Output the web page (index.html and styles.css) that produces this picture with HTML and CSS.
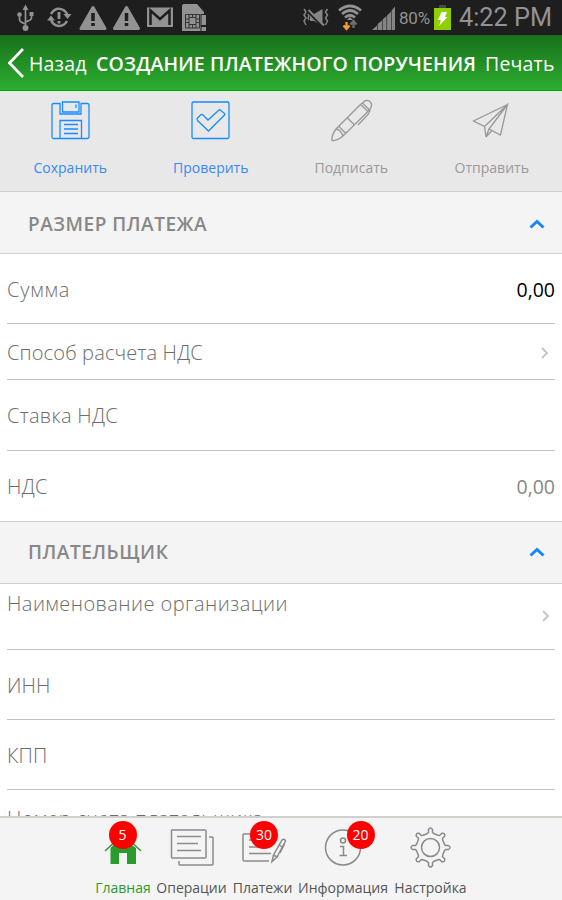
FILE: index.html
```html
<!DOCTYPE html>
<html lang="ru">
<head>
<meta charset="utf-8">
<title>Создание платежного поручения</title>
<link rel="stylesheet" href="styles.css">
</head>
<body>
<div class="screen">
  <div class="status">
    <svg class="status-icons" width="562" height="35" viewBox="0 0 562 35" fill="none" stroke="#929292" stroke-width="1.7">
      <path d="M25.500 8V28M19.500 15V19.500Q19.500 22 25.500 24M31.500 14V18Q31.500 20 25.500 22"/>
      <path d="M25.500 4.500L28.500 10H22.500Z" fill="#929292" stroke="none"/>
      <circle cx="25.500" cy="28" r="3" fill="#929292" stroke="none"/><circle cx="19.500" cy="14.500" r="2.300" fill="#929292" stroke="none"/><path d="M29.500 12h4v4h-4z" fill="#929292" stroke="none"/>
      <path d="M51 14C55 7 64 7 67.500 15M67 21C63 28 54 28 50.500 19" stroke-width="2.500"/>
      <path d="M63.500 14H71.500L67.500 19ZM47 20.500H55L51 15.500Z" fill="#929292" stroke="none"/>
      <path d="M59 12V19M59 21V23.500" stroke-width="2.800"/>
      <g fill="#929292" stroke="#929292" stroke-width="3" stroke-linejoin="round"><path d="M93 7.500L105 28.500H81ZM126.500 7.500L138.500 28.500H114.500Z"/></g>
      <path d="M93 13V21M93 23V26M126.500 13V21M126.500 23V26" stroke="#1e1e1e" stroke-width="3.500"/>
      <path d="M147 7.500H173V27H147Z" fill="#929292" stroke="none"/><path d="M150.500 25V10.500L160 19L169.500 10.500V25" stroke="#1e1e1e" stroke-width="2.500"/>
      <path d="M184 4H197L204 12V31H182V6Q182 4 184 4Z" fill="#929292" stroke="none"/>
      <path d="M185.500 14.500H199.500V28H185.500ZM189 17.500h7v7h-7zM189 14.500v3m3.500-3v3m3.500-3v3M189 24.500v3.500m3.500-3.500v3.500m3.500-3.500v3.500M185.500 19h3.500m-3.500 3.500h3.500m7-3.500h3.500m-3.500 3.500h3.500" stroke="#333" stroke-width="1"/>
      <path d="M200.500 14H207V32H200.500Z" fill="#1e1e1e" stroke="none"/><path d="M201.500 15H206V25H201.500ZM201.500 27H206V31H201.500Z" fill="#929292" stroke="none"/>
      <g stroke="#858585"><path d="M310 14H314L322.500 9V26L314 21H310Z" fill="#858585" stroke="none"/><path d="M307 11L323 27" stroke="#1e1e1e" stroke-width="2"/><path d="M308.500 10L324 25.500" stroke-width="2"/><path d="M304 9l2 3-2 3 2 3-2 3 2 4M308 14l1 2-1 2 1 2M327.500 9l-2 3 2 3-2 3 2 3-2 4" stroke-width="1.500"/></g>
      <g stroke-width="2.700" stroke="#929292"><path d="M339 10.500Q350 1.500 361 10.500M342 14Q350 7 358 14M345 17.500Q350 13 355 17.500"/></g>
      <path d="M350 17L353 20H347Z" fill="#929292" stroke="none"/>
      <path d="M346.500 22V29M343.500 25.500L346.500 29L349.500 25.500" stroke="#f79a32" stroke-width="2.300"/><path d="M353.500 28V22M350.500 24.500L353.500 21L356.500 24.500" stroke="#6e6e6e" stroke-width="2.300"/>
      <path d="M372 30L377 25.500V30ZM377.600 30V24L382 20.500V30ZM382.600 30V19.500L386.500 16V30ZM387.100 30V15.500L391 11.500V30ZM391.600 30V10.500L395 6.500V30Z" fill="#858585" stroke="none"/>
      <path d="M439 5H446V9H439Z" fill="#484848" stroke="none"/><path d="M434 8H451V30H434Z" fill="#8fce00" stroke="none"/><path d="M441.500 12H447L445 17H447.500L439 26L441 20H438Z" fill="#fff" stroke="none"/>
    </svg>
    <span class="battery">80%</span><span class="clock">4:22 PM</span>
  </div>
  <header class="nav">
    <svg width="17" height="30" viewBox="0 0 17 30"><path d="M15 1L1.500 15L15 29" fill="none" stroke="#fff" stroke-width="2.700"/></svg>
    <span class="back">Назад</span><h1>СОЗДАНИЕ ПЛАТЕЖНОГО ПОРУЧЕНИЯ</h1><span class="print">Печать</span>
  </header>
  <div class="tools">
    <div class="tool active"><svg viewBox="0 0 42 44"><path d="M10 3.500H3.500Q2 3.500 2 5V37Q2 38.500 3.500 38.500H37.500Q39 38.500 39 37V5Q39 3.500 37.500 3.500H31V14H10ZM12.500 2H29V12H12.500ZM26 4.500V8M10 38.500V20.500H31.500V38.500M14 24.500H28M14 29H28M14 33.500H28"/></svg><span>Сохранить</span></div>
    <div class="tool active"><svg viewBox="0 0 42 44"><rect x="2" y="2" width="37" height="36.500" rx="1.500"/><path d="M7.500 18L11 14.500Q12 14 13 15L18 20L29.500 9.500L34.500 13.500Q35 14 34.500 15L18.500 31L7.500 20.500Q6.500 19 7.500 18Z"/></svg><span>Проверить</span></div>
    <div class="tool"><svg viewBox="0 0 42 44"><path d="M1 40.500Q.500 35 5 29L29.500 4.500L37 11.500L13 35Q7 41 1 40.500ZM5 29Q10 30 12 36M8 26.500L15 33.500M16.500 18L23.500 25M31.500 3.500Q34-1 38.500 1Q42.500 5 39 9L37 11M29.500 4.500L31.500 3L39 10.500L37.500 14L27 25"/></svg><span>Подписать</span></div>
    <div class="tool"><svg viewBox="0 0 42 44"><path d="M36.500 4.500L2.500 21L13.500 26.500L15 37L18 29L29.500 35L36.500 4.500L13.500 26.500M36.500 4.500L18 29M15 37L20.500 31"/></svg><span>Отправить</span></div>
  </div>
  <main class="form">
    <div class="section"><h2>РАЗМЕР ПЛАТЕЖА</h2><svg width="16" height="10" viewBox="0 0 16 10"><path d="M1.500 8.500L8 2.500L14.500 8.500"/></svg></div>
    <div class="row"><span class="w-sum">Сумма</span><b>0,00</b></div>
    <div class="row short"><span class="w-mode">Способ расчета НДС</span><svg class="more" width="8" height="12" viewBox="0 0 8 12"><path d="M1 1L6 6L1 11"/></svg></div>
    <div class="row"><span>Ставка НДС</span></div>
    <div class="row last"><span>НДС</span><b class="muted">0,00</b></div>
    <div class="section second"><h2>ПЛАТЕЛЬЩИК</h2><svg width="16" height="10" viewBox="0 0 16 10"><path d="M1.500 8.500L8 2.500L14.500 8.500"/></svg></div>
    <div class="row org"><span class="w-org">Наименование организации</span><svg class="more" width="8" height="12" viewBox="0 0 8 12"><path d="M1 1L6 6L1 11"/></svg></div>
    <div class="row"><span class="w-code">ИНН</span></div>
    <div class="row kpp"><span class="w-code">КПП</span></div>
    <div class="row account"><span>Номер счета плательщика</span></div>
  </main>
  <nav class="tabs">
    <div class="tab t1 selected"><div class="pic"><svg width="44" height="44" viewBox="0 0 44 44"><path d="M9.500 39V23L20 12L35 23V39H26V28H18V39Z" fill="#299c2d" stroke="none"/><path d="M4 26L22 9L40 26" stroke="#299c2d"/></svg><i>5</i></div><span>Главная</span></div>
    <div class="tab t2"><div class="pic"><svg width="44" height="44" viewBox="0 0 44 44"><path d="M1.500 5.500Q1.500 5 2 5H35Q36 5 36 6V32Q36 33 35 33H2.500Q1.500 33 1.500 32ZM39 12H42Q43 12 43 13V39Q43 40 42 40H10Q9 40 9 39V36M7 11.500H31M7 18.500H28M7 25.500H31"/></svg></div><span>Операции</span></div>
    <div class="tab t3"><div class="pic"><svg width="44" height="44" viewBox="0 0 44 44"><path d="M30 9H3Q2 9 2 10V34Q2 36 3 36H28M8 15H20M8 22H25M8 28.500H30M31 36.500L32.500 30L41 15Q43.500 13 44.500 16L36 32ZM32.500 30L36 32M38 20L41 22M43.500 19L39 28"/></svg><i>30</i></div><span>Платежи</span></div>
    <div class="tab t4"><div class="pic"><svg width="44" height="44" viewBox="0 0 44 44"><circle cx="22" cy="22.500" r="17.500"/><circle cx="22" cy="15.500" r="2.500"/><path d="M19 21.500H22.500V30.500M18.500 30.500H26"/></svg><i>20</i></div><span>Информация</span></div>
    <div class="tab t5"><div class="pic"><svg width="44" height="44" viewBox="-21.500 -22.500 44 44"><path stroke-linejoin="round" d="M-3.500 -13.800L-2 -15V-18Q0 -21 2 -18V-15L3.500 -13.800L7.500 -12.200L9.200 -12L11.300 -14.200Q14.800 -14.800 14.200 -11.300L12 -9.200L12.200 -7.500L13.800 -3.500L15 -2H18Q21 0 18 2H15L13.800 3.500L12.200 7.500L12 9.200L14.200 11.300Q14.800 14.800 11.300 14.200L9.200 12L7.500 12.200L3.500 13.800L2 15V18Q0 21 -2 18V15L-3.500 13.800L-7.500 12.200L-9.200 12L-11.300 14.200Q-14.800 14.800 -14.200 11.300L-12 9.200L-12.200 7.500L-13.800 3.500L-15 2H-18Q-21 0 -18 -2H-15L-13.800 -3.500L-12.200 -7.500L-12 -9.200L-14.200 -11.300Q-14.800 -14.800 -11.300 -14.200L-9.200 -12L-7.500 -12.200Z"/><circle r="9"/></svg></div><span>Настройка</span></div>
  </nav>
</div>
</body>
</html>
```
FILE: styles.css
```css
* { box-sizing: border-box; }
body { margin: 0; font-family: "Open Sans", sans-serif; background: #fff; }
.screen { width: 562px; height: 900px; overflow: hidden; display: flex; flex-direction: column; }
.status { position: relative; height: 35px; flex: none; background: #1e1e1e; color: #929292; font-family: Roboto, sans-serif; display: flex; align-items: center; }
.status-icons { position: absolute; inset: 0; }
.battery { margin-left: 399px; width: 60px; font-size: 17px; letter-spacing: -.2px; }
.clock { font-size: 25.300px; line-height: 35px; white-space: nowrap; }
.nav { height: 56px; flex: none; display: flex; align-items: center; padding: 2px 7px 0 8px; background: linear-gradient(#19701b, #2bae2f); border-bottom: 1px solid #00a800; color: #fff; font-size: 19.500px; white-space: nowrap; }
.nav svg { flex: none; margin-top: -2px; }
.back { margin-left: 4px; width: 67px; letter-spacing: .2px; }
.nav h1 { margin: 0; width: 389px; font-size: 19.500px; font-weight: 600; letter-spacing: .14px; }
.print { flex: none; letter-spacing: .2px; }
.tools { height: 101px; flex: none; display: grid; grid-template-columns: repeat(4, 1fr); background: #e8e8e8; border-bottom: 1px solid #cfcfcf; }
.tool { display: flex; flex-direction: column; align-items: center; color: #999; font-size: 14px; line-height: 20px; padding-top: 9px; }
.tool.active { color: #3988ef; }
.tool svg { width: 42px; height: 44px; fill: none; stroke: #999; stroke-width: 1.300; overflow: visible; position: relative; left: .5px; }
.tool.active svg { stroke: #168cff; }
.tool span { margin-top: 14px; }
.form { flex: 1; min-height: 0; overflow: hidden; }
.section { height: 62px; background: #f4f4f4; border-bottom: 1px solid #cfcfcf; padding: 0 17px 0 28px; display: flex; align-items: center; justify-content: space-between; }
.section h2 { font-size: 19px; line-height: 26px; margin: 2px 0 0; font-weight: 600; color: #888; white-space: nowrap; letter-spacing: .52px; }
.section svg { fill: none; stroke: #1688ff; stroke-width: 3; margin-top: 2px; }
.section.second { height: 63px; border-top: 1px solid #cfcfcf; }
.section.second h2 { margin-top: 0; }
.section.second svg { margin-top: 0; }
.row { height: 70.300px; margin: 0 7px; border-bottom: 1px solid #c3c3c3; display: flex; align-items: center; justify-content: space-between; font-size: 20px; line-height: 28px; font-weight: 300; color: #6c6c6c; white-space: nowrap; padding-top: 2px; letter-spacing: .3px; }
.row b { font-size: 19.500px; font-weight: 400; color: #000; letter-spacing: 0; }
.row .muted { color: #888; }
.w-sum { letter-spacing: .8px; }
.w-mode { letter-spacing: .15px; }
.w-org { letter-spacing: .45px; }
.w-code { letter-spacing: .1px; }
.more { fill: none; stroke: #c4c4c4; stroke-width: 1.800; margin-right: 6px; }
.short { height: 56px; }
.last { border: 0; }
.org { height: 66px; align-items: flex-start; padding-top: 6px; }
.org .more { margin-top: 20px; margin-right: 5px; }
.account { align-items: flex-start; padding-top: 15px; }
.tabs { height: 84px; flex: none; display: flex; padding-left: 94px; background: #f4f4f4; border-top: 2px solid #d0d1cc; }
.tab { display: flex; flex-direction: column; align-items: center; flex: none; font-size: 14px; line-height: 20px; color: #555; white-space: nowrap; }
.tab.selected { color: #299c2d; }
.t1 { width: 58px; }
.t2 { width: 79px; }
.t3 { width: 63px; }
.t4 { width: 98px; }
.t5 { width: 77px; }
.pic { position: relative; width: 44px; height: 60px; padding-top: 7px; }
.pic svg { display: block; fill: none; stroke: #8a8a8a; stroke-width: 1.500; overflow: visible; }
.pic i { position: absolute; top: 3px; left: 7.500px; width: 28px; height: 28px; border-radius: 50%; background: #f00; color: #fff; font: 14px/28px "Open Sans", sans-serif; text-align: center; }
.t3 .pic i { left: 9.500px; }
.t4 .pic i { left: 25.500px; }
```
